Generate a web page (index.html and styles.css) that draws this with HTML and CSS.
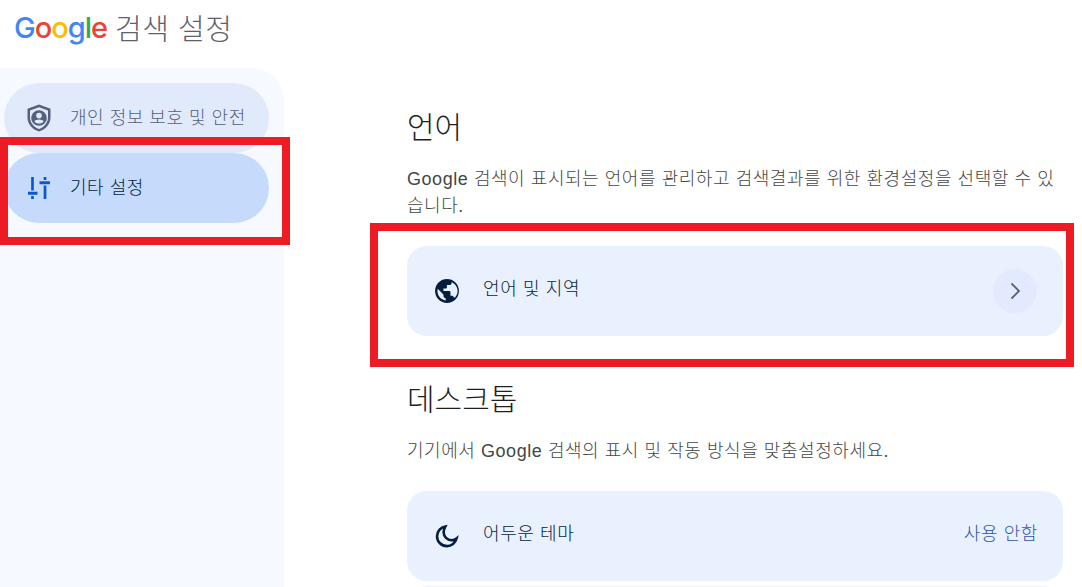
FILE: index.html
```html
<!DOCTYPE html>
<html lang="ko">
<head>
<meta charset="utf-8">
<title>Google 검색 설정</title>
<link rel="stylesheet" href="styles.css">
</head>
<body>
<header class="top">
  <span class="logo"><span class="b">G</span><span class="r">o</span><span class="y">o</span><span class="b">g</span><span class="g">l</span><span class="r">e</span></span>
  <span class="product">검색 설정</span>
</header>
<div class="layout">
  <nav class="side">
    <a class="nav-item">
      <svg class="nav-icon" viewBox="0 0 24 28" width="24" height="28"><path fill="#565f7c" fill-rule="evenodd" d="M12 0.500 23.500 4.800V13.500C23.500 20 18.500 25.600 12 27.500 5.500 25.600 0.500 20 0.500 13.500V4.800ZM12 3.300 3 6.600V13.500C3 18.700 7 23.200 12 24.900 17 23.200 21 18.700 21 13.500V6.600Z"/><path fill="#565f7c" fill-rule="evenodd" d="M12 6.200A7.800 7.800 0 1 0 12 21.800 7.800 7.800 0 1 0 12 6.200ZM12 8.800A2.800 2.800 0 1 1 12 14.400 2.800 2.800 0 1 1 12 8.800ZM12 15.600C14.200 15.600 16 16.300 16.600 17.400 15.400 18.800 13.800 19.500 12 19.500 10.200 19.500 8.600 18.800 7.400 17.400 8 16.300 9.800 15.600 12 15.600Z"/></svg>
      <span class="nav-label">개인 정보 보호 및 안전</span>
    </a>
    <a class="nav-item active">
      <svg class="nav-icon" viewBox="0 0 24 24" width="24" height="24"><path fill="none" stroke="#0b57d0" stroke-width="2.700" d="M5.500 1v13.500M5.500 20v3M18 1v3M18 9.500V23"/><path fill="none" stroke="#0b57d0" stroke-width="3" d="M1 17.200h9.500M12.500 6.700H23"/></svg>
      <span class="nav-label">기타 설정</span>
    </a>
  </nav>
  <main class="content">
    <h2 class="title">언어</h2>
    <p class="desc">Google 검색이 표시되는 언어를 관리하고 검색결과를 위한 환경설정을 선택할 수 있습니다.</p>
    <div class="card">
      <svg class="card-icon" viewBox="0 0 24 24" width="26" height="26"><path fill="#041e3c" d="M12 1a11 11 0 1 0 0 22 11 11 0 0 0 0-22Zm-1.200 19.700C6.500 20.100 3.200 16.400 3.200 12c0-.7.100-1.300.2-2L8.700 15.300v1.100c0 1.200 1 2.200 2.100 2.200Zm7.600-2.800c-.3-.9-1.100-1.500-2.100-1.500h-1.100v-3.300c0-.6-.5-1.100-1.100-1.100H8.700V9.800h2.100c.6 0 1.100-.5 1.100-1.100V6.500h2.200c1.200 0 2.200-1 2.200-2.200v-.4c3.200 1.300 5.500 4.500 5.500 8.100 0 2.300-.9 4.400-2.400 5.900Z"/></svg>
      <span class="card-label">언어 및 지역</span>
      <span class="chev"><svg viewBox="0 0 24 24" width="24" height="24"><path fill="none" stroke="#565f7c" stroke-width="1.800" d="M8.500 4.500 16 12 8.500 19.500"/></svg></span>
    </div>
    <h2 class="title second">데스크톱</h2>
    <p class="desc">기기에서 Google 검색의 표시 및 작동 방식을 맞춤설정하세요.</p>
    <div class="card">
      <svg class="card-icon" viewBox="0 0 24 24" width="26" height="26"><path fill="none" stroke="#041e3c" stroke-width="2.400" d="M10.500 3.200C6 4 2.800 7.900 2.800 12.300c0 5.100 4.100 9 9.100 9 4.200 0 7.900-2.900 8.900-7-1.200 1-2.800 1.600-4.500 1.600-4.100 0-7.400-3.300-7.400-7.300 0-1.900.600-3.500 1.600-5.400Z"/></svg>
      <span class="card-label">어두운 테마</span>
      <span class="card-value">사용 안함</span>
    </div>
    <div class="card next"></div>
  </main>
</div>
<div class="mark mark-side"></div>
<div class="mark mark-card"></div>
</body>
</html>
```
FILE: styles.css
```css
* { box-sizing: border-box; }
html, body { margin: 0; padding: 0; height: 100%; overflow: hidden; background: #fff; }
body { font-family: "Liberation Sans", "Noto Sans CJK KR", sans-serif; color: #1f1f1f; position: relative; }
.top { height: 68px; padding: 8px 0 0 14px; display: flex; align-items: flex-start; gap: 9px; }
.logo { font-family: "Inter", sans-serif; font-size: 29px; line-height: 40px; font-weight: 500; letter-spacing: -1px; width: 92px; white-space: nowrap; }
.b { color: #4285f4; } .r { color: #ea4335; } .y { color: #fbbc05; } .g { color: #34a853; }
.product { font-family: "Noto Sans CJK KR", sans-serif; font-weight: 300; font-size: 29px; line-height: 40px; color: #5f6368; letter-spacing: 0.5px; margin-top: -1px; }
.layout { display: flex; height: 519px; overflow: hidden; }
.side { width: 284px; flex: none; background: #f6f9ff; border-top-right-radius: 32px; padding: 15px 15px 0 4px; }
.nav-item { height: 70px; display: flex; align-items: center; padding-left: 23px; border-radius: 35px; background: #e1eafb; color: #565f7c; }
.nav-item.active { background: #c6dafc; color: #041e3c; }
.nav-icon { flex: none; }
.nav-label { font-family: "Noto Sans CJK KR", sans-serif; font-weight: 300; font-size: 18px; line-height: 24px; margin-left: 19px; margin-top: -4px; letter-spacing: 0.5px; white-space: nowrap; }
.content { margin-left: 123px; width: 656px; flex: none; height: 519px; overflow: hidden; }
.title { margin: 33px 0 0; font-family: "Noto Sans CJK KR", sans-serif; font-weight: 300; font-size: 30px; line-height: 48px; color: #1f1f1f; }
.title.second { margin-top: 37px; }
.desc { margin: 17px 0 0; font-size: 18px; line-height: 27px; font-weight: 300; color: #444746; letter-spacing: 0.55px; }
.card { height: 90px; border-radius: 20px; background: #e9f0fe; display: flex; align-items: center; padding: 0 25px 0 27px; margin-top: 26px; color: #041e3c; }
.card-icon { flex: none; }
.card-label { font-family: "Noto Sans CJK KR", sans-serif; font-weight: 300; font-size: 18px; line-height: 24px; margin-left: 23px; margin-top: -8px; flex: 1; letter-spacing: 0.6px; }
.card-value { font-family: "Noto Sans CJK KR", sans-serif; font-weight: 300; font-size: 18px; line-height: 24px; color: #2f54b0; margin-top: -8px; letter-spacing: 0.6px; }
.chev { width: 44px; height: 44px; border-radius: 50%; background: #e3eafd; display: flex; align-items: center; justify-content: center; margin-right: 1px; }
.card.next { margin-top: 5px; }
.mark { position: absolute; border: 8px solid #ed1c24; pointer-events: none; }
.mark-side { left: 0; top: 137px; width: 290px; height: 108px; }
.mark-card { left: 370px; top: 223px; width: 704px; height: 144px; }
```
